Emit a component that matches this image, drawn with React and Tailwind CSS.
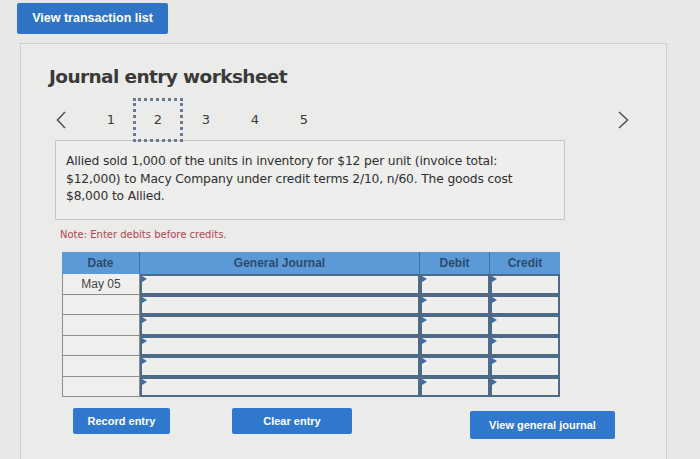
import React from "react";

function Marker() {
  return (
    <span className="absolute left-0 top-0 w-0 h-0 border-t-[3px] border-b-[3px] border-l-[5px] border-t-transparent border-b-transparent border-l-[#3b6fa8]"></span>
  );
}

function InputCell({ w }) {
  return (
    <div className={`relative ${w} h-full border-[2px] border-[#4d6a88] bg-[#eeeeec]`}>
      <Marker />
    </div>
  );
}

export default function App() {
  const rows = ["May 05", "", "", "", "", ""];
  const arial = { fontFamily: '"Liberation Sans", Arial, sans-serif' };
  return (
    <div className="w-[700px] h-[459px] overflow-hidden bg-[#e8e8e6] relative" style={{ fontFamily: '"DejaVu Sans", Verdana, sans-serif' }}>
      <div className="pl-[17px] pt-[3px]">
        <button className="h-[31px] w-[151px] bg-[#2f74c6] rounded-[2px] text-white text-[12.5px] font-bold" style={arial}>
          View transaction list
        </button>
      </div>
      <div className="ml-[20px] mt-[9px] w-[647px] h-[420px] border border-[#cfcfcd] bg-[#ebebe9] pl-[28px] pt-[20px]">
        <h1 className="text-[18.5px] font-bold text-[#3a3a3a] tracking-[-0.6px] leading-[26px]">Journal entry worksheet</h1>
        <div className="flex items-center mt-[10px] h-[40px] text-[13px] text-[#3b3b3b]">
          <span className="w-[40px] pl-[7px] flex items-center">
            <svg width="10" height="18" viewBox="0 0 10 18"><polyline points="9,1 1.5,9 9,17" fill="none" stroke="#555" strokeWidth="1.6" /></svg>
          </span>
          <span className="w-[44px] text-center">1</span>
          <span className="w-[50px] h-[44px] flex items-center justify-center border-[3px] border-dotted border-[#6c7a9a]">2</span>
          <span className="w-[46px] text-center">3</span>
          <span className="w-[52px] text-center">4</span>
          <span className="w-[46px] text-center">5</span>
          <span className="ml-auto mr-[37px] flex items-center">
            <svg width="11" height="18" viewBox="0 0 11 18"><polyline points="1,1 9.5,9 1,17" fill="none" stroke="#555" strokeWidth="1.6" /></svg>
          </span>
        </div>
        <div className="ml-[6px] w-[510px] h-[80px] border border-[#c6c6c4] bg-[#eeeeec] pl-[10px] pr-[20px] pt-[12px] text-[12.3px] leading-[17.5px] text-[#2e2e2e] tracking-[-0.15px]">
          Allied sold 1,000 of the units in inventory for $12 per unit (invoice total: $12,000) to Macy Company under credit terms 2/10, n/60. The goods cost $8,000 to Allied.
        </div>
        <div className="ml-[11px] mt-[7px] text-[10px] text-[#b24455]">Note: Enter debits before credits.</div>
        <div className="ml-[13px] mt-[10px] w-[498px]">
          <div className="flex h-[22px] bg-[#5b9ad6] text-[12px] font-bold text-[#2d4b70]" style={arial}>
            <div className="w-[78px] flex items-center justify-center border-r border-[#3f6f9f]">Date</div>
            <div className="w-[280px] flex items-center justify-center border-r border-[#3f6f9f]">General Journal</div>
            <div className="w-[70px] flex items-center justify-center border-r border-[#3f6f9f]">Debit</div>
            <div className="w-[70px] flex items-center justify-center">Credit</div>
          </div>
          {rows.map((d, i) => (
            <div key={i} className="flex h-[20.5px]">
              <div className="w-[78px] h-full border-l border-b border-r border-[#8d8d8d] bg-[#efefed] text-[12px] text-[#444] flex items-center justify-center" style={arial}>
                {d}
              </div>
              <InputCell w="w-[280px]" />
              <InputCell w="w-[70px]" />
              <InputCell w="w-[70px]" />
            </div>
          ))}
        </div>
        <div className="flex items-start mt-[11px] text-white text-[11px] font-bold" style={arial}>
          <button className="ml-[24px] w-[97px] h-[26px] bg-[#2f78cd] rounded-[2px]">Record entry</button>
          <button className="ml-[62px] w-[120px] h-[26px] bg-[#2f78cd] rounded-[2px]">Clear entry</button>
          <button className="ml-[118px] mt-[3px] w-[145px] h-[28px] bg-[#2f78cd] rounded-[2px]">View general journal</button>
        </div>
      </div>
    </div>
  );
}
